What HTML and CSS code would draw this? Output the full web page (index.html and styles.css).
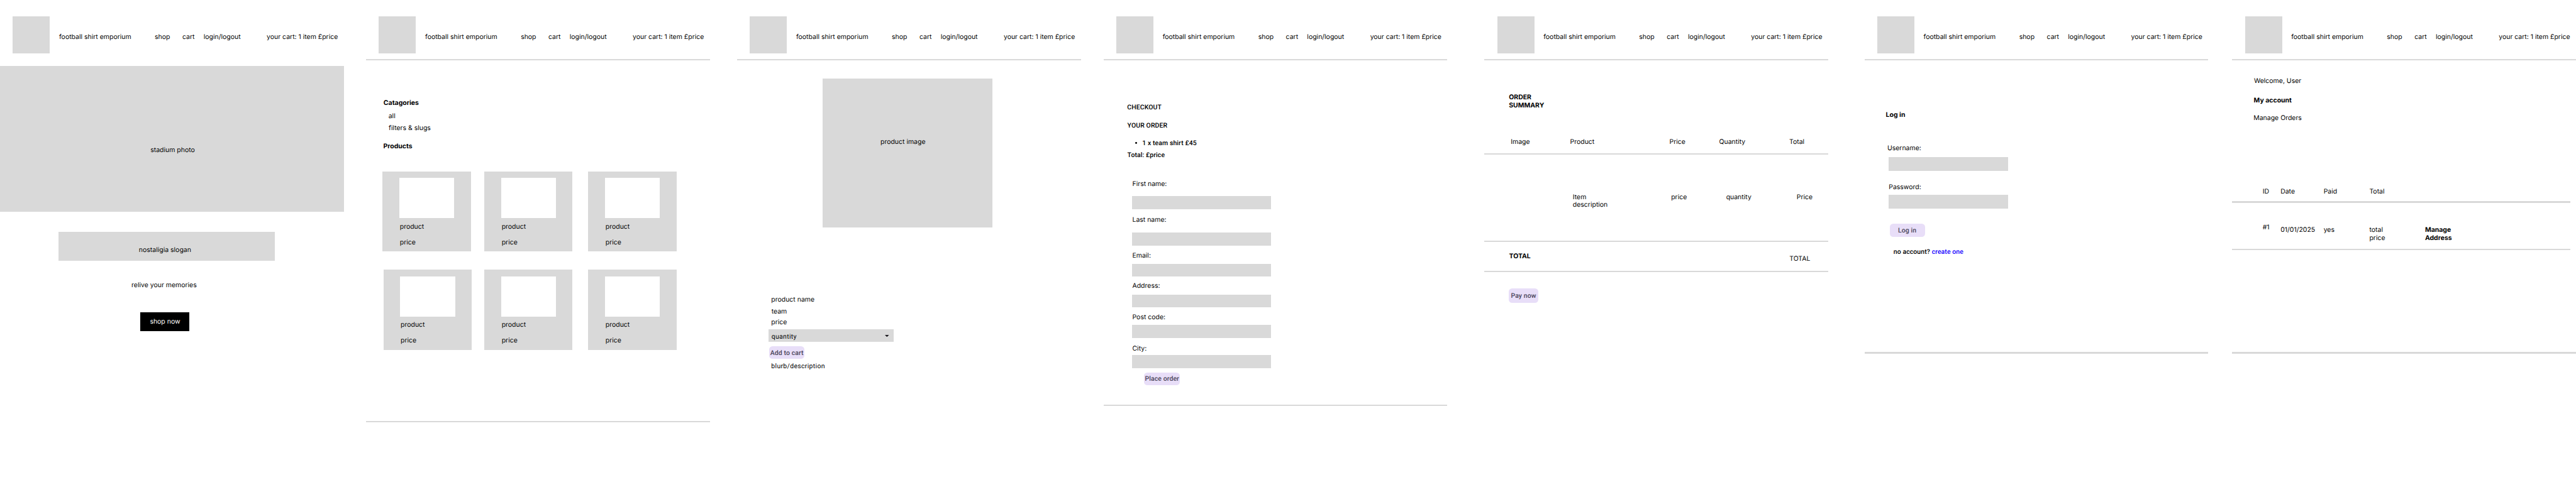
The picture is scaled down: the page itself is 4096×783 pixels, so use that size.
FILE: index.html
```html
<!DOCTYPE html>
<html lang="en">
<head>
<meta charset="utf-8">
<title>football shirt emporium wireframes</title>
<link rel="stylesheet" href="styles.css">
</head>
<body>
<main class="board">

<section class="frame home">
  <header class="site-header">
    <div class="logo"></div><p>football shirt emporium</p><p>shop</p><p>cart</p><p>login/logout</p><p>your cart: 1 item £price</p>
  </header>
  <div class="stadium"><p>stadium photo</p></div>
  <div class="slogan"><p>nostaligia slogan</p></div>
  <p class="relive">relive your memories</p>
  <div class="shop-now"><p>shop now</p></div>
</section>

<section class="frame shop">
  <header class="site-header">
    <div class="logo"></div><p>football shirt emporium</p><p>shop</p><p>cart</p><p>login/logout</p><p>your cart: 1 item £price</p>
  </header>
  <div class="rule"></div>
  <p class="categories-title bold">Catagories</p>
  <p class="category-all">all</p>
  <p class="category-filters">filters &amp; slugs</p>
  <p class="products-title bold">Products</p>
  <div class="products">
    <article class="card"><div class="card-photo"></div><p class="card-name">product</p><p class="card-price">price</p></article>
    <article class="card"><div class="card-photo"></div><p class="card-name">product</p><p class="card-price">price</p></article>
    <article class="card"><div class="card-photo"></div><p class="card-name">product</p><p class="card-price">price</p></article>
    <article class="card card-nudged"><div class="card-photo"></div><p class="card-name">product</p><p class="card-price">price</p></article>
    <article class="card"><div class="card-photo"></div><p class="card-name">product</p><p class="card-price">price</p></article>
    <article class="card"><div class="card-photo"></div><p class="card-name">product</p><p class="card-price">price</p></article>
  </div>
  <div class="rule shop-end"></div>
</section>

<section class="frame product">
  <header class="site-header">
    <div class="logo"></div><p>football shirt emporium</p><p>shop</p><p>cart</p><p>login/logout</p><p>your cart: 1 item £price</p>
  </header>
  <div class="rule"></div>
  <div class="product-image"><p>product image</p></div>
  <p class="product-name">product name</p>
  <p class="product-team">team</p>
  <p class="product-price">price</p>
  <div class="select">
    <p class="body-roboto">quantity</p>
    <svg class="arrow" viewBox="0 0 10 5"><path d="M0 0h10L5 5z" fill="#1d1b20"/></svg>
  </div>
  <div class="button add"><p>Add to cart</p></div>
  <p class="blurb body-roboto">blurb/description</p>
</section>

<section class="frame checkout">
  <header class="site-header">
    <div class="logo"></div><p>football shirt emporium</p><p>shop</p><p>cart</p><p>login/logout</p><p>your cart: 1 item £price</p>
  </header>
  <div class="rule"></div>
  <p class="checkout-title medium">CHECKOUT</p>
  <p class="order-title medium">YOUR ORDER</p>
  <div class="order-item medium"><span class="bullet"></span><p>1 x team shirt £45</p></div>
  <p class="order-total medium">Total: £price</p>
  <div class="field first-name"><p>First name:</p><div class="input"></div></div>
  <div class="field last-name"><p>Last name:</p><div class="input"></div></div>
  <div class="field email"><p>Email:</p><div class="input"></div></div>
  <div class="field address"><p>Address:</p><div class="input"></div></div>
  <div class="field post-code"><p>Post code:</p><div class="input"></div></div>
  <div class="field city"><p>City:</p><div class="input"></div></div>
  <div class="button place"><p>Place order</p></div>
  <div class="rule checkout-end"></div>
</section>

<section class="frame summary">
  <header class="site-header">
    <div class="logo"></div><p>football shirt emporium</p><p>shop</p><p>cart</p><p>login/logout</p><p>your cart: 1 item £price</p>
  </header>
  <div class="rule"></div>
  <p class="summary-title two-line bold">ORDER<br>SUMMARY</p>
  <div class="summary-head"><p>Image</p><p>Product</p><p>Price</p><p>Quantity</p><p>Total</p></div>
  <div class="rule rule-head"></div>
  <div class="summary-item"><p class="two-line">Item<br>description</p><p>price</p><p>quantity</p><p>Price</p></div>
  <div class="rule rule-item"></div>
  <div class="summary-total"><p class="bold">TOTAL</p><p class="sum">TOTAL</p></div>
  <div class="rule rule-total"></div>
  <div class="button pay"><p>Pay now</p></div>
</section>

<section class="frame login">
  <header class="site-header">
    <div class="logo"></div><p>football shirt emporium</p><p>shop</p><p>cart</p><p>login/logout</p><p>your cart: 1 item £price</p>
  </header>
  <div class="rule"></div>
  <p class="login-title bold">Log in</p>
  <p class="username">Username:</p>
  <div class="input username-input"></div>
  <p class="password">Password:</p>
  <div class="input password-input"></div>
  <div class="button log-in"><p>Log in</p></div>
  <p class="no-account medium">no account? <a class="link">create one</a></p>
  <div class="rule login-end"></div>
</section>

<section class="frame account">
  <header class="site-header">
    <div class="logo"></div><p>football shirt emporium</p><p>shop</p><p>cart</p><p>login/logout</p><p>your cart: 1 item £price</p>
  </header>
  <div class="rule"></div>
  <p class="welcome">Welcome, User</p>
  <p class="my-account bold">My account</p>
  <p class="manage-orders">Manage Orders</p>
  <div class="orders-row orders-head"><p>ID</p><p>Date</p><p>Paid</p><p>Total</p></div>
  <div class="rule orders-rule-head"></div>
  <div class="orders-row orders-item"><p class="order-id">#1</p><p>01/01/2025</p><p>yes</p><p class="two-line">total<br>price</p><p class="two-line bold">Manage<br>Address</p></div>
  <div class="rule orders-rule-item"></div>
  <div class="rule account-end"></div>
</section>

</main>
</body>
</html>
```
FILE: styles.css
```css
/* Sizes inside the board are design pixels; its zoom fits the 6249px board to the window. */
html { background: #fff; }
body { margin: 0; width: 4096px; height: 783px; overflow: hidden; }

.board {
  zoom: 0.65545;
  display: flex;
  width: 6249px;
  height: 1194px;
  overflow: hidden;
  font: 400 16px/19px Inter, sans-serif;
  text-rendering: geometricPrecision;
  color: #000;
}
p { box-sizing: border-box; height: 19px; margin: 0; padding: 1.3px 0 0 1px; white-space: nowrap; line-height: 19px; }
.two-line { height: 38px; }

.frame { display: flex; flex-direction: column; align-items: flex-start; flex: none; width: 834px; }
.shop { margin-left: 54px; }
.product { margin-left: 66px; }
.checkout { margin-left: 55px; }
.summary { margin-left: 90px; }
.login { margin-left: 88px; }
.account { margin-left: 58px; }

.bold { font-weight: 700; }
.medium { font-family: Roboto, sans-serif; font-weight: 500; letter-spacing: 0.15px; }
.body-roboto { font-family: Roboto, sans-serif; letter-spacing: 0.5px; }

/* Shared header */
.site-header {
  display: grid;
  grid-template-columns: 142.5px 232px 67px 51.5px 153px auto;
  align-items: start;
  height: 144px;
}
.site-header p { margin-top: 80.3px; }
.logo { width: 90px; height: 90px; margin: 39px 0 0 31px; background: #d9d9d9; }
.rule { width: 834px; height: 3px; flex: none; background: #d9d9d9; }

.button {
  display: flex;
  align-items: center;
  justify-content: center;
  box-sizing: border-box;
  width: 86px;
  height: 31px;
  border-radius: 8px;
  background: #e8def8;
  color: #4a4459;
  font-family: Roboto, sans-serif;
  font-weight: 500;
  letter-spacing: 0.15px;
}
.button p { padding: 0.7px 0 0; }
.input { background: #d9d9d9; }

/* Home */
.stadium { width: 470px; height: 160.4px; margin-top: 16px; padding: 193.6px 0 0 364px; background: #d9d9d9; }
.slogan { width: 331px; height: 36.5px; margin: 48.5px 0 0 142px; padding: 34.5px 0 0 194px; background: #d9d9d9; }
.relive { margin: 48.5px 0 0 318px; }
.shop-now { width: 120px; height: 33px; margin: 57px 0 0 340px; padding-top: 13px; background: #000; color: #fff; text-align: center; }

/* Shop */
.categories-title { margin: 93px 0 0 41.5px; }
.category-all { margin: 13px 0 0 53.5px; }
.category-filters { margin: 10px 0 0 54px; }
.products-title { margin: 24.5px 0 0 41px; }
.products { display: grid; grid-template-columns: 247px 252px 214px; row-gap: 44px; margin: 52.5px 0 0 40px; }
.card { box-sizing: border-box; width: 214px; height: 195px; padding: 16px 0 0 41px; background: #d9d9d9; }
.card-nudged { margin-left: 2px; }
.card-photo { width: 133px; height: 98px; background: #fff; }
.card-name { margin-top: 10px; }
.card-price { margin-top: 19px; }
.shop-end { margin-top: 172px; }

/* Product */
.product-image { width: 273px; height: 218.3px; margin: 44px 0 0 207px; padding: 142.7px 0 0 140px; background: #d9d9d9; }
.product-name { margin: 164.7px 0 0 82px; }
.product-team { margin: 10px 0 0 82.5px; }
.product-price { margin: 8.3px 0 0 82px; }
.select { display: flex; justify-content: space-between; box-sizing: border-box; width: 304px; height: 30px; margin: 8px 0 0 76px; padding: 7px 11px 0 6.5px; background: #d9d9d9; }
.arrow { width: 10px; height: 5px; margin-top: 6px; }
.add { margin: 11px 0 0 78px; }
.blurb { margin: 7.3px 0 0 82px; }

/* Checkout */
.checkout-title { margin: 103px 0 0 56.5px; }
.order-title { margin: 26px 0 0 57px; }
.order-item { display: flex; align-items: center; gap: 11.5px; margin: 23px 0 0 77px; }
.bullet { width: 4.5px; height: 4.5px; border-radius: 50%; background: #000; }
.order-total { margin: 10.3px 0 0 57px; }
.field { display: flex; flex-direction: column; align-items: flex-start; margin-left: 69px; }
.field .input { width: 336px; height: 32px; margin-left: 1px; }
.first-name { gap: 20.3px; margin-top: 51.4px; }
.last-name { gap: 20.6px; margin-top: 16.4px; }
.email { gap: 10.5px; margin-top: 14.7px; }
.address { gap: 12.3px; margin-top: 11.5px; }
.post-code { gap: 10.5px; margin-top: 12.5px; }
.city { gap: 5.9px; margin-top: 16.1px; }
.place { margin: 11px 0 0 99px; }
.checkout-end { margin-top: 47px; }

/* Order summary */
.summary-title { margin: 79.5px 0 0 58.5px; }
.summary-head { display: grid; grid-template-columns: 144px 241px 120.5px 170.2px auto; margin: 69.2px 0 0 63px; }
.rule-head { margin-top: 20.3px; }
.summary-item { display: grid; grid-template-columns: 238.5px 133.5px 171px auto; margin: 92.4px 0 0 213.5px; }
.rule-item { margin-top: 78.6px; }
.summary-total { display: grid; grid-template-columns: 680px auto; height: 24px; margin: 24.7px 0 0 59px; }
.sum { margin-top: 5px; }
.rule-total { height: 4px; margin-top: 20.3px; }
.pay { width: 72px; height: 34px; margin: 40px 0 0 59px; }

/* Log in */
.login-title { margin: 121.2px 0 0 51px; }
.username { margin: 62px 0 0 54.5px; }
.login .input { width: 290px; height: 33px; margin-left: 59px; }
.username-input { margin-top: 13.8px; }
.password { margin: 29.5px 0 0 58px; }
.password-input { margin-top: 9.5px; }
.log-in { margin: 38px 0 0 61px; }
.no-account { margin: 27px 0 0 69.5px; }
.link { color: #1400ff; }
.login-end { height: 4px; margin-top: 234px; }

/* Account */
.welcome { margin: 39.7px 0 0 52px; }
.my-account { margin: 28px 0 0 51.5px; }
.manage-orders { margin: 24px 0 0 51px; }
.orders-row { display: grid; grid-template-columns: 43.5px 104.5px 111px 135px auto; margin-left: 73px; }
.orders-head { margin-top: 159px; }
.orders-rule-head { width: 821px; height: 3.5px; margin-top: 15.3px; }
.orders-item { margin-top: 50.2px; }
.orders-item p { margin-top: 6px; }
.orders-item .order-id { margin-top: 0; }
.orders-rule-item { width: 821px; height: 3.5px; margin-top: 17.3px; }
.account-end { height: 4px; margin-top: 247.5px; }
```
